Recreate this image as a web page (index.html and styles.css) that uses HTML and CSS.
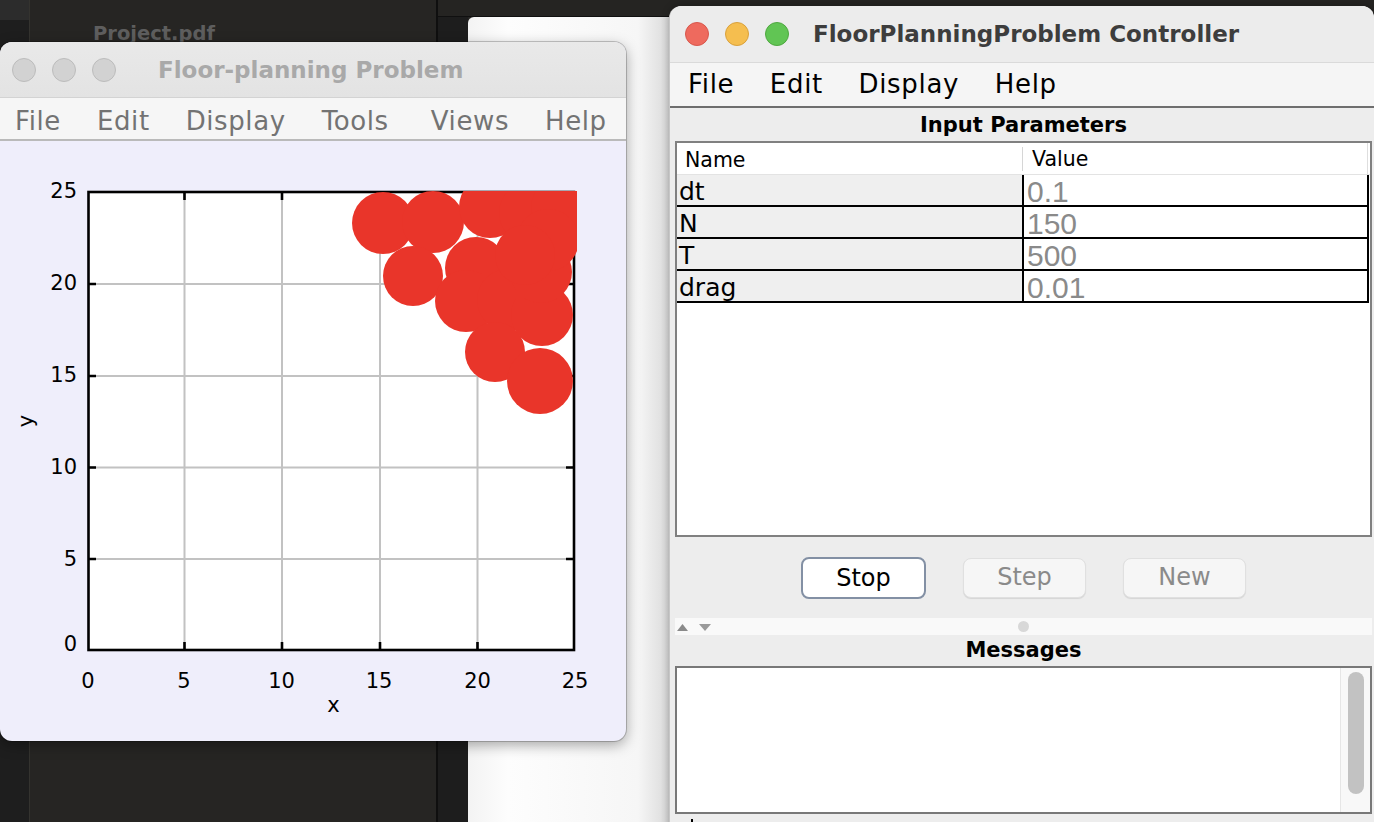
FILE: index.html
```html
<!DOCTYPE html>
<html>
<head>
<meta charset="utf-8">
<title>FloorPlanningProblem</title>
<link rel="stylesheet" href="styles.css">
</head>
<body>
<div class="desktop">
  <div class="side-strip"><div class="side-top"></div></div>
  <div class="pdf-pane"><div class="pdf-title">Project.pdf</div></div>
  <div class="right-area">
    <div class="top-band"></div>
    <div class="lower">
      <div class="dark-gap"></div>
      <div class="doc-window"></div>
    </div>
  </div>
</div>

<div class="window plot-window">
  <div class="titlebar">
    <div class="lights">
      <span class="light inactive"></span>
      <span class="light inactive"></span>
      <span class="light inactive"></span>
    </div>
    <div class="title inactive-title">Floor-planning Problem</div>
  </div>
  <div class="menubar inactive-menu">
    <span>File</span><span>Edit</span><span>Display</span><span>Tools</span><span class="menu-wide">Views</span><span>Help</span>
  </div>
  <div class="plot-content">
    <svg class="plot" width="626" height="600" viewBox="0 141 626 600">
      <defs>
        <clipPath id="pc"><rect x="88" y="191" width="489" height="460"/></clipPath>
      </defs>
      <rect x="88.5" y="192" width="485.5" height="458" fill="#fff"/>
      <g stroke="#c2c2c2" stroke-width="2">
        <line x1="184.5" y1="192" x2="184.5" y2="650"/>
        <line x1="282" y1="192" x2="282" y2="650"/>
        <line x1="380" y1="192" x2="380" y2="650"/>
        <line x1="477.5" y1="192" x2="477.5" y2="650"/>
        <line x1="88" y1="284" x2="574" y2="284"/>
        <line x1="88" y1="376" x2="574" y2="376"/>
        <line x1="88" y1="467.5" x2="574" y2="467.5"/>
        <line x1="88" y1="559" x2="574" y2="559"/>
      </g>
      <rect x="88.5" y="192" width="485.5" height="458" fill="none" stroke="#000" stroke-width="2.6"/>
      <g stroke="#000" stroke-width="2.6" fill="none">
        <path d="M184.5 650v-8M282 650v-8M380 650v-8M477.5 650v-8"/>
        <path d="M184.5 192v8M282 192v8M380 192v8M477.5 192v8"/>
        <path d="M88 284h8M88 376h8M88 467.5h8M88 559h8"/>
        <path d="M574 284h-8M574 376h-8M574 467.5h-8M574 559h-8"/>
      </g>
      <g clip-path="url(#pc)" fill="#e9352a">
        <circle cx="383" cy="223" r="31"/>
        <circle cx="433" cy="222" r="31"/>
        <circle cx="413" cy="276" r="30"/>
        <circle cx="476" cy="268" r="31"/>
        <circle cx="466" cy="301" r="31"/>
        <circle cx="508" cy="300" r="31"/>
        <circle cx="495" cy="352" r="30"/>
        <circle cx="540" cy="381" r="33"/>
        <circle cx="542" cy="315" r="31"/>
        <circle cx="541" cy="272" r="31"/>
        <circle cx="490" cy="207" r="31"/>
        <circle cx="530" cy="213" r="31"/>
        <circle cx="562" cy="208" r="31"/>
        <circle cx="548" cy="240" r="31"/>
        <circle cx="525" cy="255" r="30"/>
      </g>
      <g class="ticklabels" text-anchor="end">
        <text x="77" y="198">25</text>
        <text x="77" y="290">20</text>
        <text x="77" y="382">15</text>
        <text x="77" y="474">10</text>
        <text x="77" y="566">5</text>
        <text x="77" y="651">0</text>
      </g>
      <g class="ticklabels" text-anchor="middle">
        <text x="88" y="688">0</text>
        <text x="184" y="688">5</text>
        <text x="281.5" y="688">10</text>
        <text x="379" y="688">15</text>
        <text x="477.5" y="688">20</text>
        <text x="575" y="688">25</text>
        <text x="333.5" y="711.5">x</text>
        <text transform="translate(32.5 421) rotate(-90)">y</text>
      </g>
    </svg>
  </div>
</div>

<div class="window ctrl-window">
  <div class="titlebar ctrl-titlebar">
    <div class="lights ctrl-lights">
      <span class="light red"></span>
      <span class="light yellow"></span>
      <span class="light green"></span>
    </div>
    <div class="title ctrl-title">FloorPlanningProblem Controller</div>
  </div>
  <div class="menubar ctrl-menu">
    <span>File</span><span>Edit</span><span>Display</span><span>Help</span>
  </div>
  <div class="ctrl-content">
    <div class="section-label">Input Parameters</div>
    <div class="param-table">
      <div class="thead">
        <div class="th th-name">Name</div>
        <div class="th th-value">Value</div>
      </div>
      <div class="trow"><div class="cell-name">dt</div><div class="cell-value">0.1</div></div>
      <div class="trow"><div class="cell-name">N</div><div class="cell-value">150</div></div>
      <div class="trow"><div class="cell-name">T</div><div class="cell-value">500</div></div>
      <div class="trow"><div class="cell-name">drag</div><div class="cell-value">0.01</div></div>
    </div>
    <div class="buttons">
      <div class="btn btn-primary">Stop</div>
      <div class="btn btn-disabled">Step</div>
      <div class="btn btn-disabled">New</div>
    </div>
    <div class="split-strip">
      <svg class="split-arrows" width="40" height="17" viewBox="0 0 40 17">
        <polygon points="2,13 7.5,6 13,13" fill="#8a8a8a"/>
        <polygon points="24,6 36,6 30,13" fill="#9a9a9a"/>
      </svg>
      <span class="split-dot"></span>
      <span></span>
    </div>
    <div class="section-label messages-label">Messages</div>
    <div class="messages">
      <div class="msg-area"></div>
      <div class="scroll-track"><div class="scroll-thumb"></div></div>
    </div>
    <div class="status"><span class="status-mark"></span></div>
  </div>
</div>
</body>
</html>
```

FILE: styles.css
```css
html, body {
  margin: 0;
  padding: 0;
}
body {
  width: 1374px;
  height: 822px;
  overflow: hidden;
  position: relative;
  background: #262523;
  font-family: "DejaVu Sans", "Noto Sans", sans-serif;
}

/* desktop background */
.desktop {
  display: flex;
  height: 822px;
}
.side-strip {
  width: 29px;
  background: #1e1e1e;
  border-right: 1px solid #34332f;
}
.side-top {
  height: 20px;
  background: #2c2c2c;
}
.pdf-pane {
  width: 343px;
  padding: 22px 0 0 63px;
  background: #262523;
  border-right: 2px solid #0f0f0f;
}
.pdf-title {
  font-weight: bold;
  font-size: 19.5px;
  line-height: 24px;
  color: #5e5e5e;
}
.right-area {
  flex: 1;
  display: flex;
  flex-direction: column;
}
.top-band {
  height: 16px;
  background: #252422;
  border-bottom: 1px solid #101010;
}
.lower {
  flex: 1;
  display: flex;
}
.dark-gap {
  width: 30px;
  background: #1d1d1d;
}
.doc-window {
  flex: 1;
  border-top-left-radius: 6px;
  background: linear-gradient(to right, #f3f3f3 0px, #fdfdfd 40px, #f6f6f6 170px, #e2e2e2 192px, #cfcfcf 203px);
}

/* windows */
.window {
  position: absolute;
  overflow: hidden;
}
.plot-window {
  left: 0;
  top: 42px;
  width: 626px;
  height: 699px;
  border-radius: 12px;
  background: #efeefb;
  box-shadow: 0 0 0 1px rgba(0, 0, 0, 0.2), 0 4px 14px rgba(0, 0, 0, 0.35);
}
.titlebar {
  display: flex;
  align-items: center;
  height: 55px;
  background: linear-gradient(#e9e9e9, #e3e3e3);
  border-bottom: 1px solid #d3d3d3;
}
.lights {
  display: flex;
  gap: 16px;
  padding-left: 12px;
}
.light {
  width: 22px;
  height: 22px;
  border-radius: 50%;
  border: 1px solid #bcbcbc;
  background: #d2d2d2;
}
.title {
  font-weight: bold;
  font-size: 23px;
  white-space: nowrap;
}
.inactive-title {
  margin-left: 42px;
  color: #a9a9a9;
}
.menubar {
  display: flex;
  gap: 36px;
  box-sizing: border-box;
  height: 43px;
  padding: 5px 0 0 15px;
  align-items: center;
  font-size: 26px;
  letter-spacing: 0.6px;
  white-space: nowrap;
}
.inactive-menu {
  background: #f6f6f6;
  border-bottom: 2px solid #bababa;
  color: #737373;
}
.menu-wide {
  margin-left: 6px;
}
.plot-content {
  height: 600px;
}
.plot {
  display: block;
}
.ticklabels {
  font-family: "DejaVu Sans", sans-serif;
  font-size: 21px;
  fill: #000;
}

/* controller window */
.ctrl-window {
  left: 670px;
  top: 6px;
  width: 704px;
  height: 830px;
  border-radius: 12px 12px 0 0;
  background: #ededed;
  box-shadow: -1px 0 0 #c6c6c6, 0 0 8px rgba(0, 0, 0, 0.3);
}
.ctrl-titlebar {
  height: 56px;
  background: #ececec;
  border-bottom: 1px solid #dadada;
}
.ctrl-lights {
  padding-left: 15px;
}
.light.red {
  background: #ee6a5e;
  border-color: #d8574c;
}
.light.yellow {
  background: #f5be4f;
  border-color: #d9a13c;
}
.light.green {
  background: #61c554;
  border-color: #4fa840;
}
.ctrl-title {
  margin-left: 24px;
  color: #3d3d3d;
}
.ctrl-menu {
  gap: 35.5px;
  height: 45px;
  padding: 0 0 2px 18px;
  letter-spacing: 0.7px;
  background: #f5f5f5;
  border-bottom: 2px solid #6e6e6e;
  color: #000;
}
.ctrl-content {
  padding-left: 5px;
  width: 697px;
}
.section-label {
  height: 33px;
  line-height: 35px;
  text-align: center;
  font-weight: bold;
  font-size: 21px;
  color: #000;
}
.param-table {
  box-sizing: border-box;
  width: 697px;
  height: 396px;
  border: 2px solid #808080;
  background: #fff;
}
.thead {
  display: flex;
  height: 31px;
  border-bottom: 1px solid #e3e3e3;
  font-size: 20.5px;
  line-height: 33px;
  color: #000;
}
.th-name {
  box-sizing: border-box;
  width: 346px;
  padding-left: 8px;
  border-right: 1px solid #d6d6d6;
  margin: 4px 0 3px;
  line-height: 26px;
}
.th-value {
  flex: 1;
  padding-left: 9px;
  line-height: 33px;
  border-right: 1px solid #dedede;
  margin-right: 2px;
}
.trow {
  display: flex;
  box-sizing: border-box;
  width: 692px;
  height: 32px;
  border-bottom: 2px solid #000;
  border-right: 2px solid #000;
}
.cell-name {
  box-sizing: border-box;
  width: 347px;
  padding-left: 2px;
  background: #efefef;
  border-right: 2px solid #000;
  font-size: 25px;
  line-height: 34px;
  color: #000;
}
.cell-value {
  flex: 1;
  padding-left: 3px;
  font-family: "Liberation Sans", Arial, sans-serif;
  font-size: 30px;
  line-height: 33px;
  color: #8a8a8a;
}
.buttons {
  display: flex;
  justify-content: center;
  gap: 37px;
  padding: 20px 0 19px;
}
.btn {
  box-sizing: border-box;
  width: 123px;
  height: 42px;
  border-radius: 8px;
  text-align: center;
  font-size: 24px;
  line-height: 38px;
}
.btn-primary {
  width: 125px;
  background: #fff;
  border: 2px solid #8390a4;
  color: #000;
}
.btn-disabled {
  height: 40px;
  margin-top: 1px;
  background: #f6f6f6;
  border: 1px solid #e0e0e0;
  box-shadow: 0 1px 1px rgba(0, 0, 0, 0.1);
  color: #8a8a8a;
  line-height: 37px;
}
.split-strip {
  display: grid;
  grid-template-columns: 1fr auto 1fr;
  align-items: center;
  height: 17px;
  background: #f9f9f9;
}
.split-arrows {
  display: block;
}
.split-dot {
  width: 11px;
  height: 11px;
  border-radius: 50%;
  background: #d8d8d8;
}
.messages-label {
  height: 31px;
  line-height: 31px;
}
.messages {
  display: flex;
  box-sizing: border-box;
  width: 697px;
  height: 148px;
  border: 2px solid #787878;
  background: #fff;
}
.msg-area {
  flex: 1;
}
.scroll-track {
  box-sizing: border-box;
  width: 30px;
  padding: 4px 0 0 7px;
  background: #f8f8f8;
  border-left: 1px solid #e6e6e6;
}
.scroll-thumb {
  width: 16px;
  height: 122px;
  border-radius: 8px;
  background: #c2c2c2;
}
.status {
  height: 10px;
  padding-left: 16px;
}
.status-mark {
  display: block;
  width: 2px;
  height: 4px;
  margin-top: 5px;
  background: #000;
}
```
